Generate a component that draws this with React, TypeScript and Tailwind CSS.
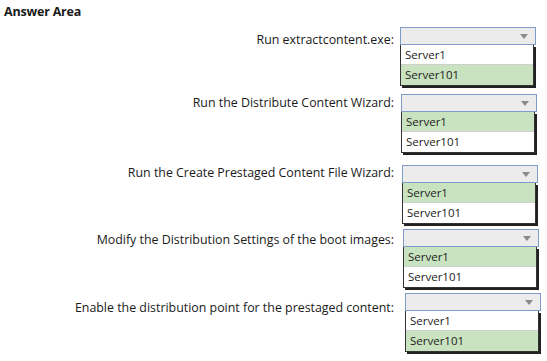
const rows = [
  { label: "Run extractcontent.exe:", pick: 1, mt: "mt-[6px]", lt: "pt-[5px]", ml: "ml-[5px]" },
  { label: "Run the Distribute Content Wizard:", pick: 0, mt: "mt-[8px]", lt: "pt-[1px]", ml: "ml-[6px]" },
  { label: "Run the Create Prestaged Content File Wizard:", pick: 0, mt: "mt-[12px]", lt: "pt-[0px]", ml: "ml-[7px]" },
  { label: "Modify the Distribution Settings of the boot images:", pick: 0, mt: "mt-[5px]", lt: "pt-[3px]", ml: "ml-[8px]" },
  { label: "Enable the distribution point for the prestaged content:", pick: 1, mt: "mt-[5px]", lt: "pt-[7px]", ml: "ml-[10px]" },
];

const options = ["Server1", "Server101"];

function Dropdown({ pick, ml }: { pick: number; ml: string }) {
  return (
    <div className={`w-[136px] ${ml}`}>
      <div className="h-[18px] border border-[#7f9cc9] bg-[#ececec] flex items-center justify-end pr-[7px]">
        <svg width="8" height="5" viewBox="0 0 8 5">
          <path d="M0 0 L8 0 L4 5 Z" fill="#8a8a8a" />
        </svg>
      </div>
      <div className="border border-[#333] border-t-0 shadow-[2px_2px_0_#222] mr-[2px]">
        {options.map((o, i) => (
          <div
            key={o}
            className={`h-[20px] px-[4px] flex items-center text-[11.5px] text-[#222] ${
              i === pick ? "bg-[#c9e3c0]" : "bg-white"
            } ${i === 0 ? "border-b border-[#d0d0d0]" : ""}`}
          >
            {o}
          </div>
        ))}
      </div>
    </div>
  );
}

export default function App() {
  return (
    <div
      className="w-[547px] h-[361px] bg-white text-[#1a1a1a] overflow-hidden"
      style={{ fontFamily: '"Open Sans", "Noto Sans", Arial, sans-serif' }}
    >
      <div className="pl-[4px] pt-[3px] text-[12.5px] font-bold tracking-[-0.2px] leading-[18px]">Answer Area</div>
      {rows.map((r) => (
        <div key={r.label} className={`flex ${r.mt}`}>
          <div className={`w-[395px] pr-[1px] text-right text-[12.4px] leading-[16px] ${r.lt}`}>{r.label}</div>
          <Dropdown pick={r.pick} ml={r.ml} />
        </div>
      ))}
    </div>
  );
}
